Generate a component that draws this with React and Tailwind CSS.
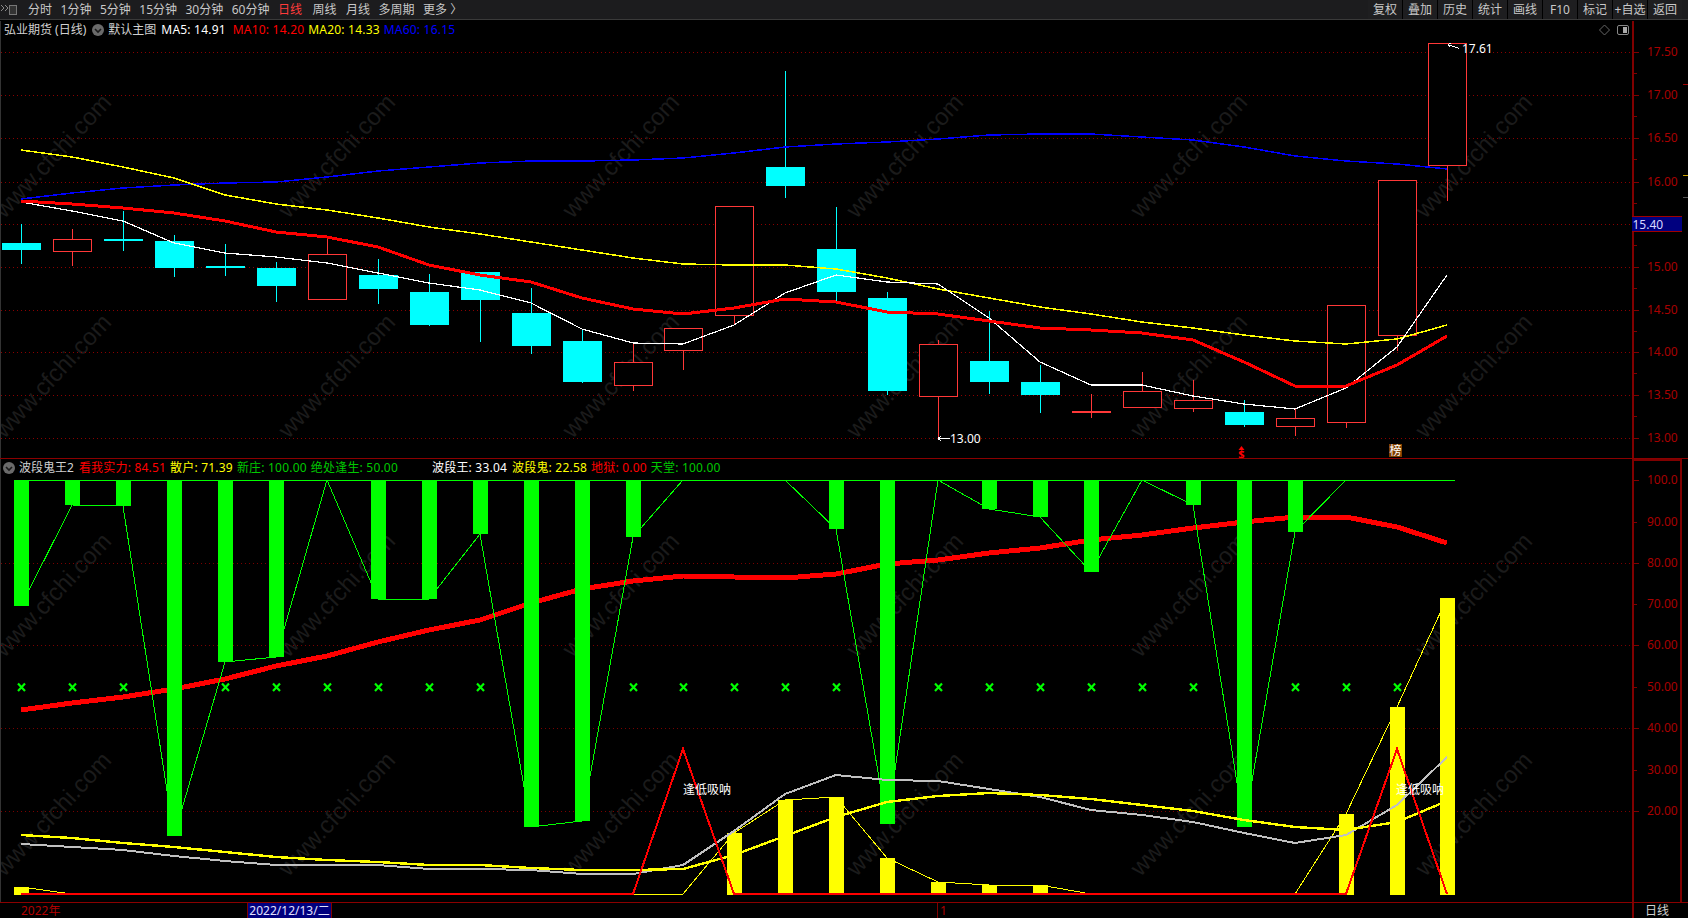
import React from "react";

const X = (i) => Math.round(21.4 + 50.93 * i);
const pts = (arr) => arr.map((y, i) => `${X(i)},${y}`).join(" ");

// [bodyTop, bodyBottom, wickTop, wickBottom, up]
const candles = [
  [243, 250, 224, 264, 0], [239, 251, 229, 266, 1], [239, 241, 211, 251, 0], [241, 268, 235, 277, 0],
  [266, 268, 244, 276, 0], [268, 286, 262, 302, 0], [254, 299, 237, 299, 1], [275, 289, 259, 304, 0],
  [292, 325, 274, 326, 0], [272, 300, 272, 342, 0], [313, 346, 288, 354, 0], [341, 382, 329, 383, 0],
  [362, 385, 342, 391, 1], [328, 350, 328, 370, 1], [206, 315, 206, 325, 1], [167, 186, 71, 198, 0],
  [249, 292, 207, 301, 0], [298, 391, 292, 395, 0], [344, 396, 340, 438, 1], [361, 382, 311, 394, 0],
  [382, 395, 365, 413, 0], [411, 413, 394, 418, 1], [391, 407, 372, 408, 1], [400, 408, 380, 412, 1],
  [412, 425, 400, 427, 0], [418, 426, 409, 436, 1], [305, 422, 305, 428, 1], [180, 335, 180, 351, 1],
  [43, 165, 43, 201, 1],
];

const ma5 = [202, 211, 221, 243, 253, 257, 263, 273, 283, 290, 303, 329, 343, 344, 325, 293, 275, 282, 284, 318, 362, 385, 385, 396, 404, 409, 388, 347, 275];
const ma10 = [201, 204, 208, 213, 221, 232, 237, 247, 265, 275, 282, 298, 309, 314, 308, 299, 302, 312, 314, 321, 328, 330, 333, 340, 362, 386, 386, 365, 336];
const ma20 = [150, 157, 167, 178, 195, 204, 210, 218, 227, 234, 242, 250, 258, 264, 265, 265, 269, 278, 289, 298, 307, 314, 322, 328, 335, 341, 344, 339, 325];
const ma60 = [199, 193, 188, 185, 183, 182, 177, 171, 167, 163, 161, 161, 160, 158, 153, 147, 144, 142, 139, 135, 134, 134, 137, 140, 147, 156, 161, 164, 169];

const greenVals = [606, 505, 506, 836, 662, 657, 480, 599, 599, 534, 827, 821, 537, 480, 480, 480, 529, 824, 480, 509, 517, 572, 480, 505, 827, 532, 480, 480, 480];
const greenBars = [0, 1, 2, 3, 4, 5, 7, 8, 9, 10, 11, 12, 16, 17, 19, 20, 21, 23, 24, 25];
const crosses = [0, 1, 2, 4, 5, 6, 7, 8, 9, 12, 13, 14, 15, 16, 18, 19, 20, 21, 22, 23, 25, 26, 27];
const redThick = [710, 703, 697, 689, 679, 666, 656, 642, 630, 620, 603, 589, 581, 576, 577, 578, 574, 564, 560, 553, 548, 540, 535, 528, 522, 517, 517, 527, 543];
const yellowThick = [835, 838, 843, 847, 852, 857, 860, 862, 865, 865, 868, 870, 870, 869, 855, 836, 817, 802, 796, 793, 795, 799, 805, 811, 820, 827, 830, 822, 801];
const grayThick = [844, 847, 850, 856, 861, 865, 865, 865, 869, 869, 870, 874, 874, 865, 831, 794, 775, 780, 781, 789, 797, 810, 815, 822, 833, 843, 835, 805, 757];
const yellowVals = [887, 894, 894, 894, 894, 894, 894, 894, 894, 894, 894, 894, 894, 894, 833, 800, 797, 858, 882, 885, 885, 894, 894, 894, 894, 894, 814, 707, 598];
const yellowBars = [0, 14, 15, 16, 17, 18, 19, 20, 26, 27, 28];

const markRows = [157, 377, 596, 815];
const markCols = [54, 338, 622, 906, 1190, 1475];

function Watermarks() {
  return (
    <g>
      {markRows.flatMap((y) =>
        markCols.map((x) => (
          <text
            key={`${x}-${y}`}
            x={x}
            y={y}
            textAnchor="middle"
            dominantBaseline="middle"
            transform={`rotate(-47 ${x} ${y})`}
            fill="#1b1b1b"
            fontSize="24"
            fontFamily="'Liberation Sans', sans-serif"
          >
            www.cfchi.com
          </text>
        ))
      )}
    </g>
  );
}

function Grid({ ys, color = "#8b0000" }) {
  return ys.map((y) => (
    <line key={y} x1="1" x2="1632" y1={y + 0.5} y2={y + 0.5} stroke={color} strokeDasharray="1 3" />
  ));
}

function Poly({ data, color, w = 1 }) {
  return <polyline points={pts(data)} fill="none" stroke={color} strokeWidth={w} strokeLinejoin="round" shapeRendering="crispEdges" />;
}

function UpperChart() {
  return (
    <svg className="block flex-1 w-full" viewBox="1 38 1631 420" width="1631" height="420">
      <Watermarks />
      <Grid ys={[52, 95, 138, 182, 224, 267, 310, 352, 395, 438]} />
      {candles.map(([t, b, wt, wb, up], i) => {
        const x = X(i);
        const c = up ? "#ff3838" : "#00ffff";
        return (
          <g key={i} shapeRendering="crispEdges">
            <rect x={x} y={wt} width="1" height={wb - wt} fill={c} />
            {up ? (
              b - t <= 2 ? (
                <rect x={x - 19} y={t} width="39" height={b - t} fill={c} />
              ) : (
                <rect x={x - 19 + 0.5} y={t + 0.5} width="38" height={b - t} fill="#000" stroke={c} />
              )
            ) : (
              <rect x={x - 19} y={t} width="39" height={b - t} fill={c} />
            )}
          </g>
        );
      })}
      <Poly data={ma60} color="#0000ff" w={1.5} />
      <Poly data={ma20} color="#ffff00" w={1.5} />
      <Poly data={ma5} color="#ffffff" w={1.2} />
      <Poly data={ma10} color="#ff0000" w={3} />
      <g stroke="#fff" fill="none" shapeRendering="crispEdges">
        <path d="M1448 44.5 L1459 48.5 M1448 44.5 L1451 43 M1448 44.5 L1450 47" />
        <path d="M938 438.5 H950 M938 438.5 L941 436 M938 438.5 L941 441" />
      </g>
      <text x="1462" y="53" fill="#fff" fontSize="12">17.61</text>
      <text x="950" y="442.5" fill="#fff" fontSize="12">13.00</text>
      <path d="M1241.5 446 L1244.5 450 H1238.5 Z" fill="#ff0000" />
      <text x="1241.5" y="458" textAnchor="middle" fill="#ff0000" fontSize="11" fontWeight="700">$</text>
      <rect x="1389" y="444" width="13" height="13" fill="#804000" />
      <text x="1395.5" y="455" textAnchor="middle" fill="#fff" fontSize="12">榜</text>
    </svg>
  );
}

function LowerChart() {
  return (
    <svg className="block flex-1 w-full" viewBox="1 476 1631 426" width="1631" height="426">
      <Watermarks />
      <Grid ys={[563, 645, 728, 811]} color="#7a0000" />
      <Poly data={redThick} color="#ff0000" w={5} />
      <rect x="14" y="480" width="1441" height="1" fill="#00ff00" />
      <Poly data={greenVals} color="#00ff00" w={1} />
      {greenBars.map((i) => (
        <rect key={i} x={X(i) - 7} y="480" width="15" height={greenVals[i] - 480} fill="#00ff00" shapeRendering="crispEdges" />
      ))}
      <g stroke="#00ff00" strokeWidth="2.2">
        {crosses.map((i) => (
          <path key={i} d={`M${X(i) - 3} 683.5 L${X(i) + 4} 691 M${X(i) + 4} 683.5 L${X(i) - 3} 691`} />
        ))}
      </g>
      {yellowBars.map((i) => (
        <rect key={i} x={X(i) - 7} y={yellowVals[i]} width="15" height={895 - yellowVals[i]} fill="#ffff00" shapeRendering="crispEdges" />
      ))}
      <Poly data={yellowVals} color="#ffff00" w={1} />
      <Poly data={grayThick} color="#c0c0c0" w={2} />
      <Poly data={yellowThick} color="#ffff00" w={2.4} />
      <polyline
        points={`${X(0)},894 ${X(12)},894 ${X(13)},749 ${X(14)},894 ${X(26)},894 ${X(27)},749 ${X(28)},894`}
        fill="none"
        stroke="#ff0000"
        strokeWidth="2"
        shapeRendering="crispEdges"
      />
      <text x="683" y="794" fill="#fff" fontSize="12">逢低吸呐</text>
      <text x="1396" y="794" fill="#fff" fontSize="12">逢低吸呐</text>
    </svg>
  );
}

function UpperAxis() {
  const labels = ["17.50", "17.00", "16.50", "16.00", "15.50", "15.00", "14.50", "14.00", "13.50", "13.00"];
  const ys = [52, 95, 138, 182, 224, 267, 310, 352, 395, 438];
  return (
    <svg className="block" viewBox="1632 21 50 437" width="50" height="437">
      <rect x="1632" y="21" width="2" height="437" fill="#800000" />
      {ys.map((y, i) => (
        <g key={y}>
          <rect x="1634" y={y} width="5" height="1" fill="#800000" />
          <rect x="1634" y={y + 21} width="3" height="1" fill="#800000" />
          {i !== 4 && (
            <text x="1647" y={y + 4} fill="#a80000" fontSize="12">
              {labels[i]}
            </text>
          )}
        </g>
      ))}
      <rect x="1632" y="217" width="50" height="15" fill="#00007f" />
      <rect x="1632" y="216" width="50" height="1" fill="#a00000" />
      <rect x="1632" y="231" width="50" height="1" fill="#a00000" />
      <text x="1632.5" y="228.5" fill="#d8d8ff" fontSize="12">15.40</text>
    </svg>
  );
}

function LowerAxis() {
  const rows = [
    ["100.0", 480], ["90.00", 522], ["80.00", 563], ["70.00", 604], ["60.00", 645],
    ["50.00", 687], ["40.00", 728], ["30.00", 770], ["20.00", 811],
  ];
  return (
    <svg className="block" viewBox="1632 459 50 443" width="50" height="443">
      <rect x="1632" y="459" width="2" height="443" fill="#800000" />
      <rect x="1680" y="459" width="2" height="443" fill="#800000" />
      <rect x="1632" y="459" width="50" height="2" fill="#800000" />
      {rows.map(([t, y], i) => (
        <g key={t}>
          <rect x="1634" y={y} width={i % 2 ? 3 : 5} height="1" fill="#800000" />
          <text x="1647" y={y + 4} fill="#a80000" fontSize="12">{t}</text>
        </g>
      ))}
    </svg>
  );
}

function Chevron({ className }) {
  return (
    <svg className={className} viewBox="0 0 12 12" width="12" height="12">
      <circle cx="6" cy="6" r="6" fill="#6a6a6a" />
      <path d="M3 5 L6 8 L9 5" fill="none" stroke="#1a1a1a" strokeWidth="1.6" />
    </svg>
  );
}

const rightTabs = ["复权", "叠加", "历史", "统计", "画线", "F10", "标记", "+自选", "返回"];

function TopBar() {
  return (
    <div className="flex h-[20px] shrink-0 items-start justify-between border-b border-[#3a3a3a] bg-[#1c1c1e] text-[12px] leading-[19px] text-[#c8c8c8]">
      <div className="flex items-center">
        <svg className="block" viewBox="0 0 18 19" width="18" height="19">
          <path d="M1 5 L4 8 L1 11 M5 5 L8 8 L5 11" fill="none" stroke="#8a8a8a" strokeWidth="1" />
          <rect x="9.5" y="5.5" width="7" height="9" fill="#333" stroke="#777" />
        </svg>
        <div className="ml-[10px] flex gap-[8.5px]">
          <span>分时</span>
          <span>1分钟</span>
          <span>5分钟</span>
          <span>15分钟</span>
          <span>30分钟</span>
          <span>60分钟</span>
          <span className="text-[#ff3b3b]">日线</span>
          <span className="ml-[2px]">周线</span>
          <span className="ml-[1px]">月线</span>
          <span>多周期</span>
          <span>更多 〉</span>
        </div>
      </div>
      <div className="mr-[6px] flex gap-px bg-black">
        {rightTabs.map((t) => (
          <span key={t} className="h-[19px] w-[34px] bg-[#1e1e20] text-center">{t}</span>
        ))}
      </div>
    </div>
  );
}

function Legend1() {
  return (
    <div className="flex h-[17px] shrink-0 items-center text-[12px] leading-[17px] whitespace-nowrap">
      <span className="ml-[3px] text-[#d0d0d0]">弘业期货 (日线)</span>
      <Chevron className="ml-[6px] block" />
      <span className="ml-[4px] text-[#d0d0d0]">默认主图</span>
      <span className="ml-[5px] tracking-[0.2px] text-white">MA5: 14.91</span>
      <span className="ml-[7px] tracking-[0.2px] text-[#ff0000]">MA10: 14.20</span>
      <span className="ml-[4px] tracking-[0.2px] text-[#ffff00]">MA20: 14.33</span>
      <span className="ml-[4px] tracking-[0.2px] text-[#0000ff]">MA60: 16.15</span>
      <svg className="ml-auto mr-[3px] block" viewBox="0 0 30 12" width="30" height="12">
        <path d="M5.5 1 L10.5 6 L5.5 11 L0.5 6 Z" fill="none" stroke="#666" />
        <rect x="18.5" y="1.5" width="11" height="9" rx="1.5" fill="none" stroke="#888" />
        <rect x="24" y="3" width="4" height="6" fill="#aaa" />
      </svg>
    </div>
  );
}

function Legend2() {
  return (
    <div className="flex h-[17px] shrink-0 items-center text-[12px] leading-[17px] whitespace-nowrap">
      <Chevron className="ml-[2px] block" />
      <span className="ml-[4px] text-[#d0d0d0]">波段鬼王2</span>
      <span className="ml-[5px] tracking-[0.2px] text-[#ff0000]">看我实力: 84.51</span>
      <span className="ml-[4px] tracking-[0.2px] text-[#ffff00]">散户: 71.39</span>
      <span className="ml-[4px] tracking-[0.2px] text-[#00c800]">新庄: 100.00</span>
      <span className="ml-[4px] tracking-[0.2px] text-[#00c800]">绝处逢生: 50.00</span>
      <span className="ml-[34px] tracking-[0.2px] text-white">波段王: 33.04</span>
      <span className="ml-[5px] tracking-[0.2px] text-[#ffff00]">波段鬼: 22.58</span>
      <span className="ml-[4px] tracking-[0.2px] text-[#ff0000]">地狱: 0.00</span>
      <span className="ml-[4px] tracking-[0.2px] text-[#00c800]">天堂: 100.00</span>
    </div>
  );
}

function RightStrip({ marks = [] }) {
  return (
    <div className="relative w-[6px] shrink-0">
      {marks.map(([top, color]) => (
        <div key={top} className="absolute left-[1px] h-px w-[5px]" style={{ top, background: color }} />
      ))}
    </div>
  );
}

function Footer() {
  return (
    <div className="flex h-[15px] shrink-0 items-stretch text-[12px] leading-[15px]">
      <div className="flex w-[1632px] shrink-0 items-stretch">
        <span className="ml-[21px] w-[226px] text-[#b00000]">2022年</span>
        <span className="w-[85px] border-x border-[#800000] bg-[#00007f] text-center text-[#e0e0ff]">2022/12/13/二</span>
        <span className="ml-[605px] w-[20px] border-l border-[#800000] pl-[2px] text-[#b00000]">1</span>
      </div>
      <div className="w-[50px] border-l-2 border-[#800000] pl-[11px] text-[#d0d0d0]">日线</div>
    </div>
  );
}

export default function App() {
  return (
    <div className="flex h-[918px] w-[1688px] flex-col overflow-hidden bg-black font-['Noto_Sans','Noto_Sans_CJK_SC',sans-serif]">
      <TopBar />
      <div className="h-px shrink-0" />
      <div className="flex h-[438px] shrink-0 border-b border-[#8b0000]">
        <div className="flex w-[1632px] shrink-0 flex-col border-l border-[#333]">
          <Legend1 />
          <UpperChart />
        </div>
        <UpperAxis />
        <RightStrip marks={[[63, "#a00000"], [154, "#c8a000"], [176, "#555"]]} />
      </div>
      <div className="flex h-[444px] shrink-0 border-b border-[#8b0000]">
        <div className="flex w-[1632px] shrink-0 flex-col border-l border-[#333]">
          <Legend2 />
          <LowerChart />
        </div>
        <LowerAxis />
        <RightStrip />
      </div>
      <Footer />
    </div>
  );
}
